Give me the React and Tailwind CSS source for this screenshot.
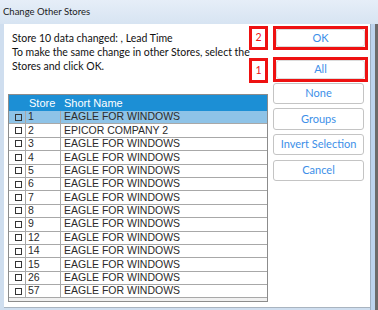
const stores = [
  ['1', 'EAGLE FOR WINDOWS'],
  ['2', 'EPICOR COMPANY 2'],
  ['3', 'EAGLE FOR WINDOWS'],
  ['4', 'EAGLE FOR WINDOWS'],
  ['5', 'EAGLE FOR WINDOWS'],
  ['6', 'EAGLE FOR WINDOWS'],
  ['7', 'EAGLE FOR WINDOWS'],
  ['8', 'EAGLE FOR WINDOWS'],
  ['9', 'EAGLE FOR WINDOWS'],
  ['12', 'EAGLE FOR WINDOWS'],
  ['14', 'EAGLE FOR WINDOWS'],
  ['15', 'EAGLE FOR WINDOWS'],
  ['26', 'EAGLE FOR WINDOWS'],
  ['57', 'EAGLE FOR WINDOWS'],
];

const uiFont = { fontFamily: 'Lato, "Open Sans", sans-serif' };

const DialogButton = ({ label, className = '' }) => (
  <button
    type="button"
    className={`flex w-[91px] items-center justify-center rounded-[3px] border border-[#c4c4c4] bg-white text-[11px] text-[#3d8fe8] ${className}`}
  >
    {label}
  </button>
);

const Marker = ({ n, className = '' }) => (
  <div className={`absolute left-[-27px] flex h-[24px] w-[19px] items-center justify-center border-[3px] border-[#ee1111] bg-white text-[10.5px] text-[#ee1111] ${className}`}>
    {n}
  </div>
);

const App = () => {
  return (
    <div className="flex h-[310px] w-[378px] flex-col overflow-hidden bg-[#cfdeef]" style={uiFont}>
      <div className="flex h-[24px] shrink-0 items-center bg-gradient-to-b from-[#e6eef8] to-[#d7e4f2] pl-[3px] text-[9.5px] text-[#1b1b1b]">
        Change Other Stores
      </div>
      <div className="flex min-h-0 flex-1">
        <div className="w-[4px] shrink-0 bg-[#cfdeef]" />
        <div className="flex h-[284px] w-[366px] shrink-0 border-b border-[#a9b4c0] bg-white">
          <div className="flex w-[265px] shrink-0 flex-col">
            <div className="whitespace-nowrap pl-[8px] pt-[7px] text-[10.5px] leading-[14px] text-[#111]">
              <p>Store 10 data changed: , Lead Time</p>
              <p>To make the same change in other Stores, select the</p>
              <p>Stores and click OK.</p>
            </div>
            <div className="ml-[4px] mt-[21px] w-[260px] border border-[#8c8c8c] bg-[#f0f0f0] pb-[3px]" style={{ fontFamily: '"Liberation Sans", Arial, sans-serif' }}>
              <div className="flex h-[16px] items-center bg-[#1c8fd5] text-[11px] text-white">
                <div className="w-[17px] shrink-0" />
                <div className="w-[35px] shrink-0 pl-[3px]">Store</div>
                <div className="pl-[3px]">Short Name</div>
              </div>
              {stores.map(([id, name], i) => (
                <div
                  key={id}
                  className={`flex h-[13.4px] items-center border-b-[1.5px] border-[#a8a8a8] text-[10.5px] text-[#2b2b2b] ${i === 0 ? 'bg-[#8ec3e7]' : 'bg-white'}`}
                >
                  <div className="flex h-full w-[17px] shrink-0 items-center justify-center border-r-[1.5px] border-[#a8a8a8]">
                    <span className="ml-[2px] block h-[7px] w-[7px] border border-[#333]" />
                  </div>
                  <div className="flex h-full w-[35px] shrink-0 items-center border-r-[1.5px] border-[#a8a8a8] pl-[2px]">{id}</div>
                  <div className="pl-[3px]">{name}</div>
                </div>
              ))}
            </div>
          </div>
          <div className="relative ml-[4px] flex flex-col pt-[2px]">
            <div className="relative w-[95px] border-[3px] border-[#ee1111]">
              <DialogButton label="OK" className="h-[18px] w-full border-[#dcdcdc]" />
              <Marker n="2" className="top-[-3px]" />
            </div>
            <div className="relative mt-[7px] w-[95px] border-[3px] border-[#ee1111]">
              <DialogButton label="All" className="h-[19px] w-full border-[#dcdcdc]" />
              <Marker n="1" className="top-[-2px] h-[25px]" />
            </div>
            <DialogButton label="None" className="mt-[1px] h-[21px]" />
            <DialogButton label="Groups" className="mt-[4px] h-[22px]" />
            <DialogButton label="Invert Selection" className="mt-[4px] h-[21px]" />
            <DialogButton label="Cancel" className="mt-[5px] h-[21px]" />
          </div>
        </div>
        <div className="flex flex-1">
          <div className="w-[1px] bg-[#9fb0c2]" />
          <div className="w-[4px] bg-[#bcd3ee]" />
          <div className="flex-1 bg-[#6b6b6b]" />
        </div>
      </div>
    </div>
  );
};

export default App;
